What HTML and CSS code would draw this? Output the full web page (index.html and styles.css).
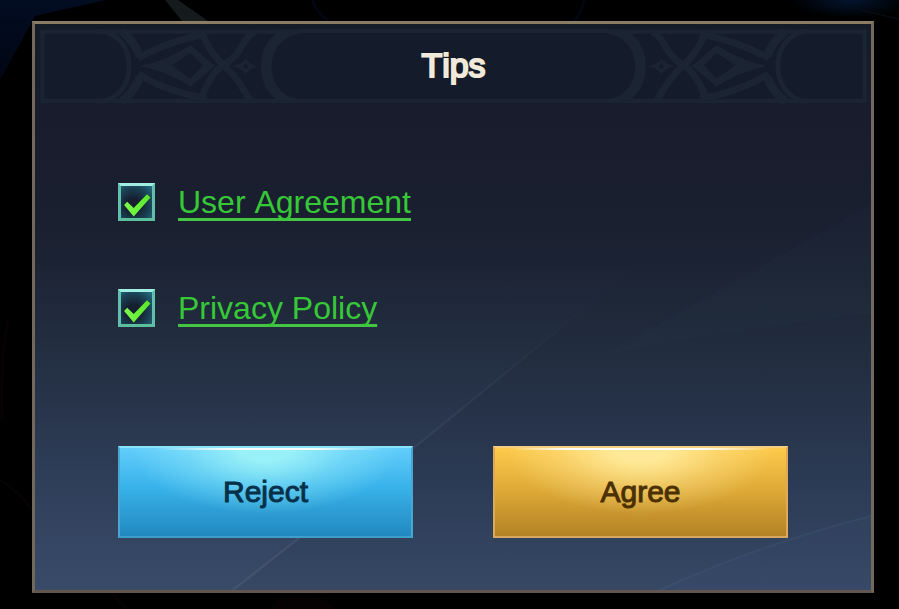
FILE: index.html
```html
<!DOCTYPE html>
<html lang="en">
  <head>
    <meta charset="UTF-8" />
    <meta name="viewport" content="width=device-width, initial-scale=1.0" />
    <title>Tips</title>
    <link rel="stylesheet" href="styles.css">
  </head>
  <body>
    <svg class="backdrop" viewBox="0 0 899 609" preserveAspectRatio="none" aria-hidden="true">
      <defs>
        <linearGradient id="night" x1="0" y1="0" x2="0" y2="1">
          <stop offset="0" stop-color="#020c22" />
          <stop offset="1" stop-color="#010613" />
        </linearGradient>
        <radialGradient id="glow">
          <stop offset="0" stop-color="#04152f" />
          <stop offset="1" stop-color="#000" />
        </radialGradient>
      </defs>
      <ellipse cx="850" cy="0" rx="60" ry="18" fill="url(#glow)" />
      <path d="M0 0H105L35 16L0 80z" fill="url(#night)" />
      <path d="M165 0H178L208 21H182z" fill="#151b1d" />
      <path d="M312 0Q318 14 328 21M584 0Q582 12 574 21" fill="none" stroke="#020612" stroke-width="3" />
      <path d="M860 10L899 19" stroke="#081018" stroke-width="1" />
      <path d="M0 480Q18 490 32 510M8 320Q0 360 2 420M113 594L127 609" fill="none" stroke="#070305" stroke-width="3" />
      <path d="M280 597Q330 594 335 609H270z" fill="#060203" />
    </svg>

    <main class="dialog">
      <svg class="streaks" viewBox="0 0 836 566" preserveAspectRatio="none" aria-hidden="true">
        <defs>
          <linearGradient id="sheen" gradientUnits="userSpaceOnUse" x1="0" y1="230" x2="0" y2="440">
            <stop offset="0" stop-color="#6f93bd" stop-opacity="0" />
            <stop offset="1" stop-color="#6f93bd" stop-opacity="0.04" />
          </linearGradient>
          <linearGradient id="edge" gradientUnits="userSpaceOnUse" x1="198" y1="566" x2="560" y2="276">
            <stop offset="0" stop-color="#8a93a6" stop-opacity="0.16" />
            <stop offset="0.5" stop-color="#8a93a6" stop-opacity="0.12" />
            <stop offset="1" stop-color="#8a93a6" stop-opacity="0" />
          </linearGradient>
        </defs>
        <path d="M0 230H618L560 276L380 423L198 566H0z" fill="url(#sheen)" />
        <path d="M198 566L380 423L560 276" fill="none" stroke="url(#edge)" stroke-width="2" />
        <path d="M568 332L650 285L836 180V290Q660 310 568 332z" fill="#6f93bd" fill-opacity="0.02" />
        <path d="M625 566Q720 522 836 492V566z" fill="#5f8fb5" fill-opacity="0.03" />
        <path d="M625 566Q720 522 836 492" fill="none" stroke="#5f8fb5" stroke-opacity="0.1" stroke-width="2" />
      </svg>

      <header class="dialog-header">
        <svg class="ornament" viewBox="120 84 780 228" aria-hidden="true">
          <g id="ornament-lines" fill="none" stroke="#1a2432" stroke-width="13">
            <path d="M900 95H127V303H900" />
            <path d="M305 94C415 110 415 288 305 304" stroke-width="15" />
            <path d="M365 94Q405 125 420 170M365 304Q405 275 420 228" stroke-width="26" />
            <path d="M415 175Q500 125 620 102M415 222Q500 275 620 296" stroke-width="21" />
            <path d="M605 96C625 150 650 180 680 205C715 235 730 270 752 302M765 96C725 110 730 165 670 195C640 215 620 250 600 302" stroke-width="21" />
            <path d="M418 198Q500 182 572 135L645 198L572 260Q500 214 418 198zM515 196L571 236L609 196L571 159z" fill="#1a2432" fill-rule="evenodd" stroke="none" />
            <path d="M695 199Q725 192 737 176Q748 192 778 199Q748 206 737 222Q725 206 695 199zM729 199L737 208L745 199L737 190z" fill="#1a2432" fill-rule="evenodd" stroke="none" />
            <path d="M900 94H840C764 130 764 270 840 304H900V298C787 285 787 115 900 101z" fill="#1a2432" stroke="none" />
          </g>
        </svg>
        <h1 class="dialog-title">Tips</h1>
        <svg class="ornament ornament-right" viewBox="120 84 780 228" aria-hidden="true">
          <use href="#ornament-lines" />
        </svg>
      </header>

      <form class="dialog-body">
        <div class="agreements">
          <div class="agreement">
            <input class="checkbox" type="checkbox" id="user-agreement" checked />
            <label for="user-agreement"><a class="agreement-link" href="#">User Agreement</a></label>
          </div>
          <div class="agreement">
            <input class="checkbox" type="checkbox" id="privacy-policy" checked />
            <label for="privacy-policy"><a class="agreement-link" href="#">Privacy Policy</a></label>
          </div>
        </div>
        <div class="buttons">
          <button class="button reject-button" type="button">Reject</button>
          <button class="button agree-button" type="button">Agree</button>
        </div>
      </form>
    </main>
  </body>
</html>
```

FILE: styles.css
```css
* {
  box-sizing: border-box;
}

body {
  margin: 0;
  padding: 21px 25px 16px 32px;
  background: #000;
  font-family: "Liberation Sans", Arial, sans-serif;
  font-kerning: none;
}

.backdrop {
  position: absolute;
  top: 0;
  left: 0;
  width: 100%;
  height: 100%;
}

.dialog {
  position: relative;
  border: 3px solid;
  border-color: #8a7d63 #73685c #62564f #73685c;
  background: linear-gradient(
    #141c28 0%,
    #191c2d 16%,
    #1a2030 36%,
    #1f293a 52%,
    #263248 68%,
    #2e3e59 85%,
    #364864 100%
  );
}

.streaks {
  position: absolute;
  top: 0;
  left: 0;
  width: 100%;
  height: 100%;
}

.dialog-header {
  position: relative;
  display: flex;
  margin: 4px 4px 0 5px;
  background: rgba(20, 27, 42, 0.8);
}

.ornament {
  flex: none;
  width: 260px;
  height: 76px;
}

.ornament-right {
  transform: scaleX(-1);
}

.dialog-title {
  flex: 1;
  margin: 1px 0;
  border-top: 4px solid #1a2432;
  border-bottom: 4px solid #1a2432;
  color: #f1e9da;
  font-size: 34px;
  font-weight: normal;
  line-height: 64px;
  text-align: center;
  -webkit-text-stroke: 2px #f1e9da;
}

.dialog-body {
  position: relative;
  padding: 79px 83px 52px;
}

.agreements {
  display: grid;
  gap: 68px;
}

.agreement {
  display: flex;
  align-items: center;
  gap: 23px;
  height: 38px;
}

.checkbox {
  appearance: none;
  flex: none;
  width: 37px;
  height: 38px;
  margin: 0;
  border: 3px solid;
  border-color: #a0eee2 #62bfae #5cc09c #62bfae;
  background: radial-gradient(ellipse at 40% 60%, #151f30 25%, #1b4356 65%, #237688 100%);
  cursor: pointer;
}

.checkbox:checked::before {
  content: "";
  display: block;
  height: 100%;
  background: linear-gradient(to right, #80fa52, #56e823);
  clip-path: polygon(10% 59%, 20% 49%, 41% 69%, 84% 26%, 95% 36%, 41% 95%);
}

.agreement-link {
  color: #37c837;
  font-size: 32px;
  line-height: 38px;
  text-decoration: underline;
  text-decoration-color: #44c544;
  text-decoration-thickness: 3px;
  text-decoration-skip-ink: none;
  text-underline-offset: 5px;
}

.buttons {
  display: grid;
  grid-template-columns: 1fr 1fr;
  gap: 80px;
  margin-top: 119px;
}

.button {
  height: 92px;
  padding: 0;
  border: 2px solid;
  font-family: inherit;
  font-kerning: none;
  font-size: 30px;
  cursor: pointer;
}

.reject-button {
  border-color: #8ce2fa #4aa6cf #3e9dcb #4aa6cf;
  background:
    linear-gradient(to right, transparent 12%, #fff 40%, #fff 65%, transparent 90%) top / 100% 2px no-repeat,
    radial-gradient(ellipse 46% 75% at 50% 0, #98f0f8 20%, rgba(152, 240, 248, 0.4) 60%, rgba(152, 240, 248, 0) 100%),
    linear-gradient(#62cdfb, #38b2ea 45%, #2189bf);
  color: #07304a;
  -webkit-text-stroke: 1px #07304a;
}

.agree-button {
  border-color: #f5cf80 #dfaa58 #d7a75f #dfaa58;
  background:
    linear-gradient(to right, transparent 5%, #fff 25%, #fff 70%, transparent 95%) top / 100% 2px no-repeat,
    radial-gradient(ellipse 46% 75% at 50% 0, #ffe998 20%, rgba(255, 233, 152, 0.4) 60%, rgba(255, 233, 152, 0) 100%),
    linear-gradient(#fdca4c, #dda836 50%, #b38225);
  color: #4b3003;
  -webkit-text-stroke: 1px #4b3003;
}
```
